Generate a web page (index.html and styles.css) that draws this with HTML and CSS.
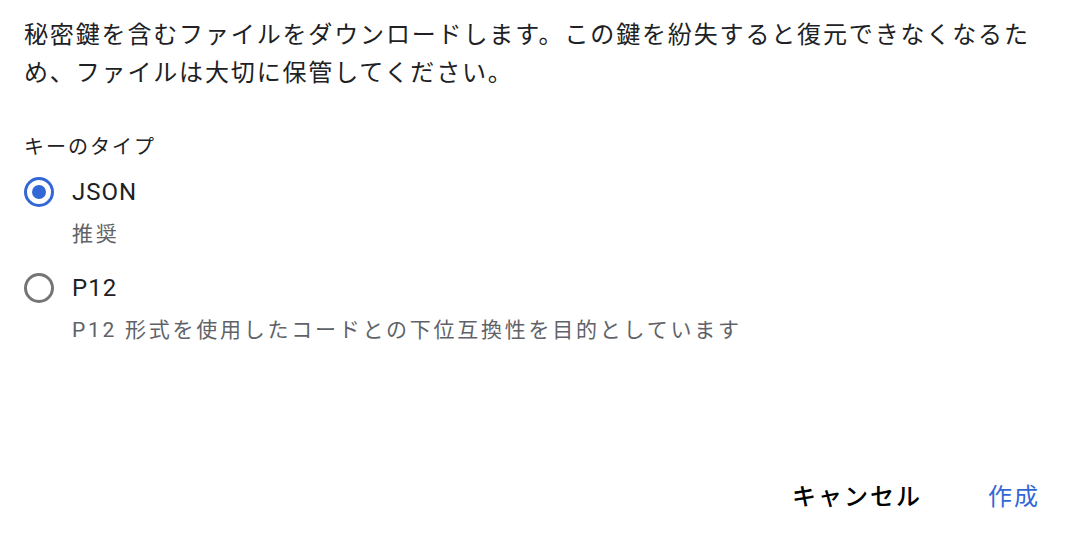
FILE: index.html
```html
<!DOCTYPE html>
<html lang="ja">
<head>
<meta charset="utf-8">
<link rel="stylesheet" href="styles.css">
</head>
<body>
<div class="dialog">
  <p class="intro">秘密鍵を含むファイルをダウンロードします。この鍵を紛失すると復元できなくなるため、ファイルは大切に保管してください。</p>
  <div class="group">
    <div class="group-label">キーのタイプ</div>
    <label class="option">
      <span class="radio checked"><span class="dot"></span></span>
      <span class="opt-text">
        <span class="opt-title">JSON</span>
        <span class="opt-desc">推奨</span>
      </span>
    </label>
    <label class="option">
      <span class="radio"></span>
      <span class="opt-text">
        <span class="opt-title">P12</span>
        <span class="opt-desc">P12 形式を使用したコードとの下位互換性を目的としています</span>
      </span>
    </label>
  </div>
  <div class="actions">
    <button class="btn cancel">キャンセル</button>
    <button class="btn primary">作成</button>
  </div>
</div>
</body>
</html>
```
FILE: styles.css
```css
html, body {
  margin: 0;
  padding: 0;
  background: #fff;
}
body {
  font-family: "Roboto", "Noto Sans CJK JP", sans-serif;
  color: #202124;
}
.dialog {
  box-sizing: border-box;
  height: 544px;
  padding: 16px 24px 0 24px;
  display: flex;
  flex-direction: column;
}
.intro {
  margin: 0;
  font-size: 24px;
  line-height: 38px;
  letter-spacing: 1.85px;
  color: #202124;
}
.group {
  margin-top: 41px;
}
.group-label {
  font-size: 20px;
  line-height: 28px;
  letter-spacing: 2px;
  color: #202124;
}
.option {
  display: flex;
  align-items: flex-start;
  gap: 18px;
  margin-top: 11px;
}
.option + .option {
  margin-top: 12px;
}
.radio {
  box-sizing: border-box;
  width: 30px;
  height: 30px;
  border-radius: 50%;
  border: 3px solid #757575;
  display: flex;
  align-items: center;
  justify-content: center;
  margin-top: 5px;
  flex: none;
}
.radio.checked {
  border-color: #3367d6;
}
.dot {
  width: 14px;
  height: 14px;
  border-radius: 50%;
  background: #3367d6;
}
.opt-text {
  display: flex;
  flex-direction: column;
}
.opt-title {
  font-size: 24px;
  line-height: 40px;
  letter-spacing: 1px;
  color: #202124;
}
.opt-desc {
  font-size: 21px;
  line-height: 44px;
  letter-spacing: 2.75px;
  color: #5f6368;
}
.actions {
  margin-top: auto;
  margin-bottom: 25px;
  display: flex;
  justify-content: flex-end;
  gap: 66px;
  padding-right: 12px;
}
.btn {
  border: none;
  background: none;
  padding: 8px 0;
  font-family: inherit;
  font-size: 24px;
  line-height: 28px;
  letter-spacing: 2px;
  font-weight: 500;
  cursor: pointer;
}
.cancel {
  color: #000;
}
.primary {
  color: #3367d6;
  font-weight: 400;
}
```
